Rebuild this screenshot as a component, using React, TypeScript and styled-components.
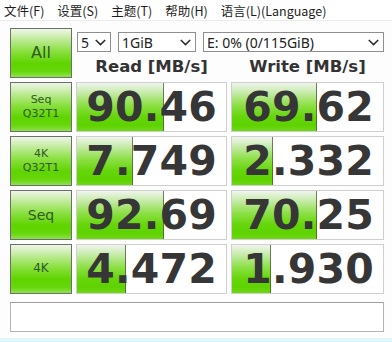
import { Fragment } from 'react';
import styled, { createGlobalStyle } from 'styled-components';

const GlobalStyle = createGlobalStyle`
  html, body {
    margin: 0;
    padding: 0;
    background: #fdfdfd;
  }
  body {
    font-family: "Noto Sans", sans-serif;
  }
`;

const Window = styled.div`
  width: 392px;
  height: 342px;
  box-sizing: border-box;
  display: flex;
  flex-direction: column;
  background: #fdfdfd;
  border-bottom: 4px solid #e2f5fa;
`;

const MenuBar = styled.div`
  height: 21px;
  box-sizing: border-box;
  display: flex;
  align-items: center;
  gap: 13px;
  padding-left: 4px;
  font-family: "Noto Sans CJK SC", "Noto Sans", sans-serif;
  font-size: 12.5px;
  color: #1e1e1e;
  background: #fff;
  border-bottom: 1px solid #ececec;
`;

const MenuItem = styled.span`
  white-space: nowrap;
`;

const Board = styled.div`
  display: grid;
  grid-template-columns: 62px 151px 153px;
  grid-template-rows: repeat(5, 50px);
  gap: 4px;
  padding: 7px 8px 0 10px;
`;

// green button on the left side (All, Seq, 4K ...)
const TestButton = styled.div<{ $size: number }>`
  box-sizing: border-box;
  border: 1px solid #6e6e6e;
  display: flex;
  flex-direction: column;
  align-items: center;
  justify-content: center;
  font-family: "DejaVu Sans", Verdana, sans-serif;
  font-size: ${({ $size }) => $size}px;
  line-height: 1.3;
  color: #2f5a22;
  background-color: #66d80a;
  background-image: linear-gradient(
    180deg,
    #eef6e8 0%,
    #bfeb98 22%,
    #86df3a 48%,
    #5fd400 72%,
    #66d70c 88%,
    #8fe04c 100%
  );
`;

const ButtonLine = styled.span`
  display: block;
  color: #2f5a22;
  -webkit-text-fill-color: #2f5a22;
`;

const TopRight = styled.div`
  grid-column: 2 / 4;
  display: flex;
  flex-direction: column;
`;

const SelectRow = styled.div`
  margin-top: 4px;
  height: 20px;
  display: flex;
  gap: 7px;
  padding-left: 1px;
`;

const Select = styled.div<{ $width?: number }>`
  box-sizing: border-box;
  height: 20px;
  ${({ $width }) => ($width ? `width: ${$width}px;` : 'flex: 1;')}
  border: 1px solid #8f8f8f;
  background: #fff;
  display: flex;
  align-items: center;
  justify-content: space-between;
  padding: 0 4px 0 3px;
  font-family: "Noto Sans", sans-serif;
  font-size: 14px;
  color: #222;
  white-space: nowrap;
`;

const HeaderRow = styled.div`
  flex: 1;
  display: grid;
  grid-template-columns: 151px 153px;
  gap: 4px;
  align-items: center;
  padding-top: 3px;
`;

const HeaderText = styled.div`
  text-align: center;
  font-family: "DejaVu Sans", Verdana, sans-serif;
  font-weight: bold;
  font-size: 16.5px;
  color: #333;
  white-space: nowrap;
`;

const ResultCell = styled.div`
  position: relative;
  box-sizing: border-box;
  border: 1px solid #cfcfcf;
  background: #fff;
  overflow: hidden;
  display: flex;
  align-items: center;
  justify-content: flex-end;
  padding-right: 9px;
`;

const Meter = styled.div`
  position: absolute;
  left: 0;
  top: 0;
  bottom: 0;
  border-right: 1px solid rgba(70, 90, 50, 0.75);
  background: linear-gradient(
    to bottom,
    #f1f5ee 0%,
    #c6ebaa 20%,
    #8fe04a 45%,
    #66d60a 70%,
    #5ed300 88%,
    #70d816 100%
  );
`;

const Score = styled.span`
  position: relative;
  font-family: "DejaVu Sans", Verdana, sans-serif;
  font-weight: bold;
  font-size: 41px;
  line-height: 1;
  color: #363636;
  letter-spacing: 0.2px;
`;

const StatusBox = styled.div`
  margin: 8px 8px 0 10px;
  height: 30px;
  box-sizing: border-box;
  border: 1px solid #b4b4b4;
  border-top-color: #a0a0a0;
  background: #fff;
`;

const Chevron = () => (
  <svg width="11" height="7" viewBox="0 0 11 7">
    <path d="M0.8 1 L5.5 5.6 L10.2 1" fill="none" stroke="#2a2a2a" strokeWidth="1.5" />
  </svg>
);

type Row = {
  label: string[];
  size: number;
  read: string;
  write: string;
};

const rows: Row[] = [
  { label: ['Seq', 'Q32T1'], size: 11, read: '90.46', write: '69.62' },
  { label: ['4K', 'Q32T1'], size: 11, read: '7.749', write: '2.332' },
  { label: ['Seq'], size: 14, read: '92.69', write: '70.25' },
  { label: ['4K'], size: 12, read: '4.472', write: '1.930' },
];

// log scale, like the meter in the original tool
const meterWidth = (value: string) => {
  const v = parseFloat(value);
  const ratio = 0.195 * Math.log10(v) + 0.194;
  return `${Math.max(0, Math.min(1, ratio)) * 100}%`;
};

const Result = ({ value }: { value: string }) => (
  <ResultCell>
    <Meter style={{ width: meterWidth(value) }} />
    <Score>{value}</Score>
  </ResultCell>
);

const App = () => {
  return (
    <>
      <GlobalStyle />
      <Window>
        <MenuBar>
          <MenuItem>文件(F)</MenuItem>
          <MenuItem>设置(S)</MenuItem>
          <MenuItem>主题(T)</MenuItem>
          <MenuItem>帮助(H)</MenuItem>
          <MenuItem>语言(L)(Language)</MenuItem>
        </MenuBar>
        <Board>
          <TestButton $size={16}>
            <ButtonLine>All</ButtonLine>
          </TestButton>
          <TopRight>
            <SelectRow>
              <Select $width={34}>
                5
                <Chevron />
              </Select>
              <Select $width={78}>
                1GiB
                <Chevron />
              </Select>
              <Select>
                E: 0% (0/115GiB)
                <Chevron />
              </Select>
            </SelectRow>
            <HeaderRow>
              <HeaderText>Read [MB/s]</HeaderText>
              <HeaderText>Write [MB/s]</HeaderText>
            </HeaderRow>
          </TopRight>
          {rows.map((row) => (
            <Fragment key={row.read}>
              <TestButton $size={row.size}>
                {row.label.map((l) => (
                  <ButtonLine key={l}>{l}</ButtonLine>
                ))}
              </TestButton>
              <Result value={row.read} />
              <Result value={row.write} />
            </Fragment>
          ))}
        </Board>
        <StatusBox />
      </Window>
    </>
  );
};

export default App;
